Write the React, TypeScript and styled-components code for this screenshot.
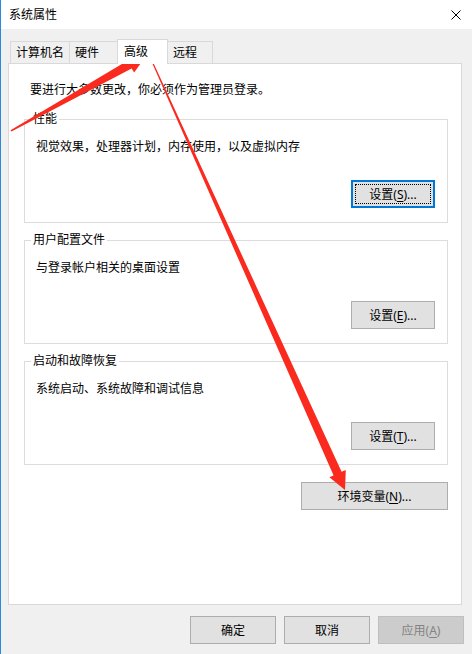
import React from "react";
import styled, { createGlobalStyle, css } from "styled-components";

const GlobalStyle = createGlobalStyle`
  html, body { margin: 0; padding: 0; background: #f0f0f0; }
  body {
    font-family: "Noto Sans", "Noto Sans CJK SC", sans-serif;
    font-size: 12px;
    color: #000;
  }
`;

const Window = styled.div`
  position: relative;
  box-sizing: border-box;
  width: 472px;
  height: 654px;
  border-left: 1px solid #2b8ae0;
  background: #f0f0f0;
  display: flex;
  flex-direction: column;
  overflow: hidden;
`;

const TitleBar = styled.div`
  height: 29px;
  flex: none;
  background: #fff;
  display: flex;
  align-items: center;
  justify-content: space-between;
  padding: 1px 11px 0 8px;
  box-sizing: border-box;
`;

const Title = styled.span`
  line-height: 16px;
`;

const CloseIcon = styled.svg`
  width: 10px;
  height: 10px;
  display: block;
`;

const Body = styled.div`
  flex: 1;
  display: flex;
  flex-direction: column;
  padding-top: 10px;
`;

const TabRow = styled.div`
  position: relative;
  z-index: 1;
  display: flex;
  align-items: flex-end;
  height: 25px;
  padding-left: 9px;
  margin-bottom: -1px;
`;

const Tab = styled.div<{ $w: number; $sel?: boolean; $l?: boolean; $r?: boolean }>`
  box-sizing: border-box;
  flex: none;
  width: ${(p) => p.$w}px;
  height: ${(p) => (p.$sel ? 25 : 22)}px;
  margin-bottom: ${(p) => (p.$sel ? 0 : 1)}px;
  border-top: 1px solid #d9d9d9;
  border-left: ${(p) => (p.$l ? "1px solid #d9d9d9" : "none")};
  border-right: ${(p) => (p.$r ? "1px solid #d9d9d9" : "none")};
  background: ${(p) => (p.$sel ? "#fff" : "#f0f0f0")};
  padding: 1px 0 ${(p) => (p.$sel ? 2 : 0)}px ${(p) => (p.$sel ? 6 : 5)}px;
  display: flex;
  align-items: center;
  line-height: 16px;
  white-space: nowrap;
`;

const Panel = styled.div`
  box-sizing: border-box;
  flex: none;
  height: 542px;
  margin: 0 10px 0 7px;
  background: #fff;
  border: 1px solid #d9d9d9;
  padding: 18px 13px 0 15px;
  display: flex;
  flex-direction: column;
`;

const Intro = styled.div`
  margin: 0 0 13px 6px;
  line-height: 16px;
  white-space: nowrap;
`;

const Group = styled.fieldset`
  margin: 0;
  min-width: 0;
  border: 1px solid #dcdcdc;
  padding: 12px 12px 14px 6px;
  & + & {
    margin-top: 9px;
  }
`;

const Legend = styled.legend`
  padding: 0 2px;
  line-height: 16px;
  font-size: 12px;
`;

const GroupText = styled.div`
  margin: 0 0 25px 5px;
  line-height: 16px;
  white-space: nowrap;
`;

const ButtonRow = styled.div<{ $top?: number }>`
  display: flex;
  justify-content: flex-end;
  margin-top: ${(p) => p.$top ?? 0}px;
`;

const Button = styled.button<{ $w: number; $default?: boolean }>`
  position: relative;
  box-sizing: border-box;
  width: ${(p) => p.$w}px;
  height: 28px;
  flex: none;
  padding: 1px 0 0;
  margin: 0;
  background: #e1e1e1;
  border: 1px solid #adadad;
  font-family: inherit;
  font-size: 12px;
  line-height: 16px;
  color: #000;
  white-space: nowrap;
  ${(p) =>
    p.$default &&
    css`
      border-color: #0078d7;
      box-shadow: inset 0 0 0 1px #0078d7;
      &::after {
        content: "";
        position: absolute;
        inset: 3px;
        border: 1px dotted #000;
      }
    `}
  &:disabled {
    background: #cccccc;
    border-color: #bfbfbf;
    color: #838383;
  }
`;

const Footer = styled.div`
  display: flex;
  justify-content: flex-end;
  gap: 8px;
  padding: 11px 8px 0 0;
`;

const Overlay = styled.svg`
  position: absolute;
  left: -1px;
  top: 0;
  width: 472px;
  height: 654px;
  pointer-events: none;
`;

const Mn = styled.u`
  text-decoration: underline;
  text-underline-offset: 2px;
`;

export default function App() {
  return (
    <>
      <GlobalStyle />
      <Window>
        <TitleBar>
          <Title>系统属性</Title>
          <CloseIcon viewBox="0 0 10 10">
            <path d="M0.5 0.5 L9.5 9.5 M9.5 0.5 L0.5 9.5" stroke="#000" strokeWidth="1" fill="none" />
          </CloseIcon>
        </TitleBar>
        <Body>
          <TabRow>
            <Tab $w={60} $l $r>计算机名</Tab>
            <Tab $w={47}>硬件</Tab>
            <Tab $w={51} $sel $l $r>高级</Tab>
            <Tab $w={45} $r>远程</Tab>
          </TabRow>
          <Panel>
            <Intro>要进行大多数更改，你必须作为管理员登录。</Intro>
            <Group>
              <Legend>性能</Legend>
              <GroupText>视觉效果，处理器计划，内存使用，以及虚拟内存</GroupText>
              <ButtonRow>
                <Button $w={84} $default>
                  设置(<Mn>S</Mn>)...
                </Button>
              </ButtonRow>
            </Group>
            <Group>
              <Legend>用户配置文件</Legend>
              <GroupText>与登录帐户相关的桌面设置</GroupText>
              <ButtonRow>
                <Button $w={84}>
                  设置(<Mn>E</Mn>)...
                </Button>
              </ButtonRow>
            </Group>
            <Group>
              <Legend>启动和故障恢复</Legend>
              <GroupText>系统启动、系统故障和调试信息</GroupText>
              <ButtonRow>
                <Button $w={84}>
                  设置(<Mn>T</Mn>)...
                </Button>
              </ButtonRow>
            </Group>
            <ButtonRow $top={17}>
              <Button $w={147}>
                环境变量(<Mn>N</Mn>)...
              </Button>
            </ButtonRow>
          </Panel>
          <Footer>
            <Button $w={86}>确定</Button>
            <Button $w={86}>取消</Button>
            <Button $w={86} disabled>
              应用(<Mn>A</Mn>)
            </Button>
          </Footer>
        </Body>
        <Overlay viewBox="0 0 472 654">
          <polygon
            fill="#fa2a1e"
            points="10.5,130.2 127.4,60.8 124.8,56.4 148,53 134.2,72.6 131.6,68.6 11.5,131.6"
          />
          <polygon
            fill="#fa2a1e"
            points="150.6,56.8 341.6,471.8 345.8,469.9 345,490 329.4,477.3 333.6,475.4 149.6,57.2"
          />
        </Overlay>
      </Window>
    </>
  );
}
